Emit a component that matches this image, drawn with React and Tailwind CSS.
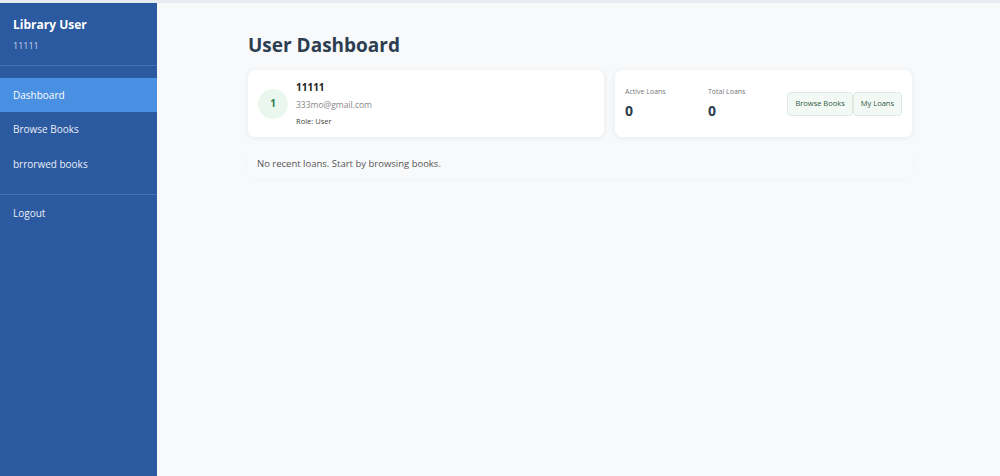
export default function App() {
  const navItems = ["Dashboard", "Browse Books", "brrorwed books"];

  return (
    <div
      className="w-[1000px] h-[476px] flex bg-[#f8f9fb] border-t-[3px] border-[#e8ebef] overflow-hidden"
      style={{ fontFamily: '"Open Sans", "Noto Sans", sans-serif' }}
    >
      {/* SIDEBAR */}
      <aside className="w-[157px] shrink-0 bg-[#2c5aa0] text-white flex flex-col">
        <div className="px-[13px] pt-[13px] pb-[13px] border-b border-[#4273b8]">
          <div className="text-[12px] font-bold leading-[18px]">
            Library User
          </div>
          <div className="text-[9px] text-[#c5d4ec] mt-[6px] leading-[12px]">
            11111
          </div>
        </div>

        <nav className="pt-[12px] pb-[12px] border-b border-[#4273b8]">
          {navItems.map((item, i) => (
            <div
              key={item}
              className={
                i === 0
                  ? "h-[34px] flex items-center px-[13px] text-[10px] bg-[#4a90e2] text-white"
                  : "h-[35px] flex items-center px-[13px] text-[10px] text-[#e8eef8]"
              }
            >
              {item}
            </div>
          ))}
        </nav>

        <div className="h-[36px] flex items-center px-[13px] text-[10px] text-[#e8eef8]">
          Logout
        </div>
      </aside>

      {/* MAIN */}
      <main className="flex-1">
        <div className="w-[664px] ml-[91px] pt-[29px]">
          <h1 className="text-[19px] font-bold text-[#2c3e50] leading-[26px]">
            User Dashboard
          </h1>

          <div className="flex gap-[11px] mt-[12px]">
            {/* PROFILE CARD */}
            <div className="w-[356px] h-[67px] bg-white rounded-[7px] shadow-[0_1px_6px_rgba(0,0,0,0.07)] flex items-center px-[10px] gap-[8px]">
              <div className="w-[30px] h-[30px] rounded-full bg-[#eaf7ee] flex items-center justify-center text-[10px] font-bold text-[#2e7d4f]">
                1
              </div>
              <div className="flex flex-col">
                <div className="text-[10px] font-bold text-[#222] leading-[14px]">
                  11111
                </div>
                <div className="text-[8.5px] text-[#888] leading-[13px] mt-[4px]">
                  333mo@gmail.com
                </div>
                <div className="text-[7.5px] text-[#444] leading-[12px] mt-[4px]">
                  Role: User
                </div>
              </div>
            </div>

            {/* STATS CARD */}
            <div className="w-[297px] h-[67px] bg-white rounded-[7px] shadow-[0_1px_6px_rgba(0,0,0,0.07)] flex items-center px-[10px]">
              <div className="w-[83px]">
                <div className="text-[7px] text-[#777] leading-[10px]">
                  Active Loans
                </div>
                <div className="text-[14px] font-bold text-[#2c3e50] leading-[18px] mt-[5px]">
                  0
                </div>
              </div>
              <div className="w-[78px]">
                <div className="text-[7px] text-[#777] leading-[10px]">
                  Total Loans
                </div>
                <div className="text-[14px] font-bold text-[#2c3e50] leading-[18px] mt-[5px]">
                  0
                </div>
              </div>
              <div className="flex ml-auto">
                <button className="h-[24px] px-[7px] whitespace-nowrap text-[7.5px] text-[#2f5a44] bg-[#f3f9f5] border border-[#dfe9e3] rounded-[4px]">
                  Browse Books
                </button>
                <button className="h-[24px] px-[7px] whitespace-nowrap text-[7.5px] text-[#2f5a44] bg-[#f3f9f5] border border-[#dfe9e3] rounded-[4px]">
                  My Loans
                </button>
              </div>
            </div>
          </div>

          {/* RECENT LOANS */}
          <div className="mt-[12px] h-[30px] flex items-center px-[9px] rounded-[6px] shadow-[0_1px_4px_rgba(0,0,0,0.02)]">
            <span className="text-[9.5px] text-[#555]">
              No recent loans. Start by browsing books.
            </span>
          </div>
        </div>
      </main>
    </div>
  );
}
